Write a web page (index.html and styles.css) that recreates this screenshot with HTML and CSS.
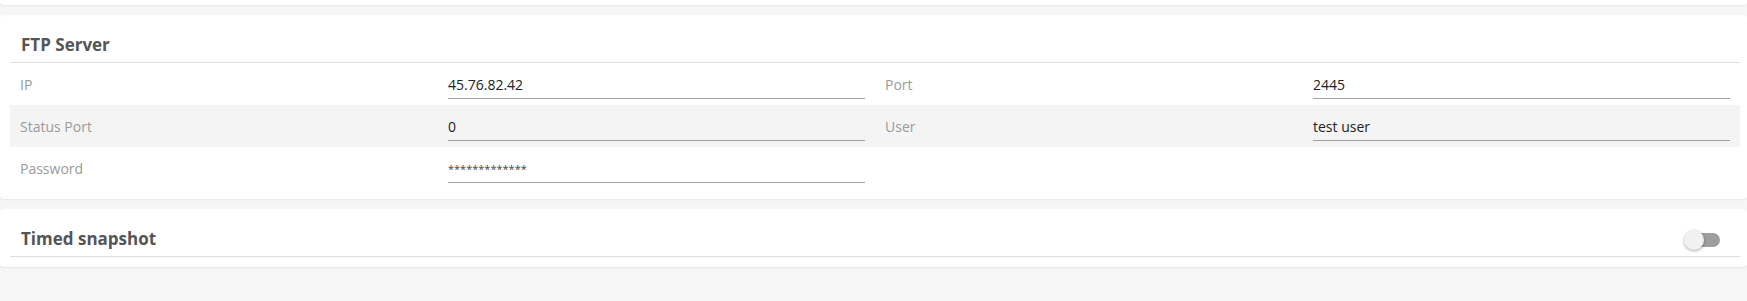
FILE: index.html
```html
<!doctype html>
<html>
<head>
<meta charset="utf-8">
<link rel="stylesheet" href="styles.css">
<title>Camera settings</title>
</head>
<body>

    <div class="card card-tail"></div>

    <section class="card">
        <header class="card-head"><h2>FTP Server</h2></header>

        <div class="field-row">
            <label class="field-label">IP</label>
            <input class="field-input" type="text" value="45.76.82.42">
            <label class="field-label second">Port</label>
            <input class="field-input" type="text" value="2445">
        </div>
        <div class="field-row striped">
            <label class="field-label">Status Port</label>
            <input class="field-input" type="text" value="0">
            <label class="field-label second">User</label>
            <input class="field-input" type="text" value="test user">
        </div>
        <div class="field-row">
            <label class="field-label">Password</label>
            <input class="field-input masked" type="text" value="*************">
        </div>
    </section>

    <section class="card">
        <header class="card-head">
            <h2>Timed snapshot</h2>
            <span class="toggle"><span class="toggle-knob"></span></span>
        </header>
    </section>

</body>
</html>
```

FILE: styles.css
```css
html
{
    background:#f6f6f6;
}
body
{
    margin:0;
    font:normal normal 14px/20px "Open Sans", "Noto Sans", sans-serif;
    color:#222;
}
.card
{
    background:#fff;
    border-radius:4px;
    box-shadow:0 1px 2px rgba(0,0,0,.07);
    padding:0 7px 10px 10px;
    margin-bottom:10px;
}
.card-tail
{
    height:5px;
    padding:0;
    border-radius:0 0 4px 4px;
}
.card-head
{
    display:flex;
    align-items:center;
    justify-content:space-between;
    box-sizing:border-box;
    height:48px;
    padding:12px 10px 0 11px;
    border-bottom:1px solid #dedede;
}
h2
{
    margin:0;
    font:normal bold 17px/24px "Open Sans", "Noto Sans", sans-serif;
    color:#555;
}

/* form rows */
.field-row
{
    display:grid;
    grid-template-columns:428fr 417fr 448fr 417fr;
    align-items:end;
    height:42px;
    box-sizing:border-box;
    padding:0 10px 6px 10px;
}
.striped
{
    background:#f4f4f4;
}
.field-label,
.field-input
{
    display:block;
    box-sizing:border-box;
    height:25px;
    padding:0 0 4px 0;
    margin:0;
    font:inherit;
    line-height:20px;
    border:none;
    border-bottom:1px solid transparent;
}
.field-label
{
    padding-top:1px;
    color:#9a9a9a;
}
.field-label.second
{
    padding-left:20px;
}
.field-input
{
    width:100%;
    background:transparent;
    color:#222;
    border-bottom-color:#a0a0a0;
    outline:none;
}
.field-input.masked
{
    font-size:11px;
    color:#444;
}

/* switch */
.toggle
{
    position:relative;
    display:block;
    width:34px;
    height:14px;
    margin:3px 10px 0 0;
    border-radius:7px;
    background:#9e9e9e;
}
.toggle-knob
{
    position:absolute;
    left:-2px;
    top:-3px;
    width:20px;
    height:20px;
    border-radius:50%;
    background:#f1f1f1;
    box-shadow:0 1px 3px rgba(0,0,0,.35);
}
```
